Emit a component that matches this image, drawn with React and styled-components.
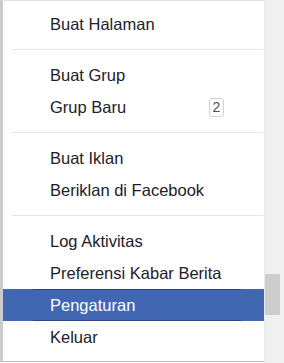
import React from "react";
import styled, { createGlobalStyle } from "styled-components";

const Global = createGlobalStyle`
  html, body { margin: 0; padding: 0; background: #ffffff; }
  body { font-family: "Liberation Sans", Arial, sans-serif; }
`;

const Frame = styled.div`
  display: flex;
  width: 284px;
  height: 363px;
  overflow: hidden;
`;

const Panel = styled.div`
  flex: 1;
  display: flex;
  flex-direction: column;
  box-sizing: border-box;
  height: 362px;
  padding-top: 7px;
  background: #ffffff;
  border-top: 1px solid #e2e2e2;
  border-left: 3px solid #cbcbcb;
  border-bottom: 1px solid #bdbdbd;
  overflow: hidden;
`;

const Track = styled.div`
  width: 20px;
  height: 363px;
  background: #f0f0f0;
  border-left: 1px solid #ececec;
  box-sizing: border-box;
  display: flex;
  flex-direction: column;
  align-items: flex-start;
`;

const Thumb = styled.div`
  margin-top: 274px;
  width: 15px;
  height: 41px;
  background: #cdcdcd;
`;

const Row = styled.div`
  display: flex;
  height: 32px;
  padding: 0 23px 0 30px;
  background: ${(p) => (p.$active ? "#4267b2" : "transparent")};
`;

const Inner = styled.div`
  flex: 1;
  display: flex;
  align-items: center;
  box-sizing: border-box;
  height: 32px;
  padding: 0 17px;
  border-top: 1px solid ${(p) => (p.$active ? "#29487d" : "transparent")};
  border-bottom: 1px solid ${(p) => (p.$active ? "#29487d" : "transparent")};
  font-size: 16.5px;
  color: ${(p) => (p.$active ? "#ffffff" : "#1d2129")};
  white-space: nowrap;
`;

const Badge = styled.span`
  margin-left: auto;
  box-sizing: border-box;
  min-width: 15px;
  height: 19px;
  padding: 0 2px;
  border: 1px solid #d0d1d5;
  border-radius: 3px;
  font-size: 14px;
  line-height: 17px;
  text-align: center;
  color: #4b4f56;
`;

const Separator = styled.div`
  height: 1px;
  margin: 9px 1px 9px 9px;
  background: #e5e5e5;
`;

const groups = [
  [{ label: "Buat Halaman" }],
  [{ label: "Buat Grup" }, { label: "Grup Baru", badge: "2" }],
  [{ label: "Buat Iklan" }, { label: "Beriklan di Facebook" }],
  [
    { label: "Log Aktivitas" },
    { label: "Preferensi Kabar Berita" },
    { label: "Pengaturan", active: true },
    { label: "Keluar" },
  ],
];

export default function App() {
  return (
    <>
      <Global />
      <Frame>
        <Panel>
          {groups.map((g, gi) => (
            <React.Fragment key={gi}>
              {gi > 0 && <Separator />}
              {g.map((item) => (
                <Row key={item.label} $active={item.active}>
                  <Inner $active={item.active}>
                    {item.label}
                    {item.badge && <Badge>{item.badge}</Badge>}
                  </Inner>
                </Row>
              ))}
            </React.Fragment>
          ))}
        </Panel>
        <Track>
          <Thumb />
        </Track>
      </Frame>
    </>
  );
}
